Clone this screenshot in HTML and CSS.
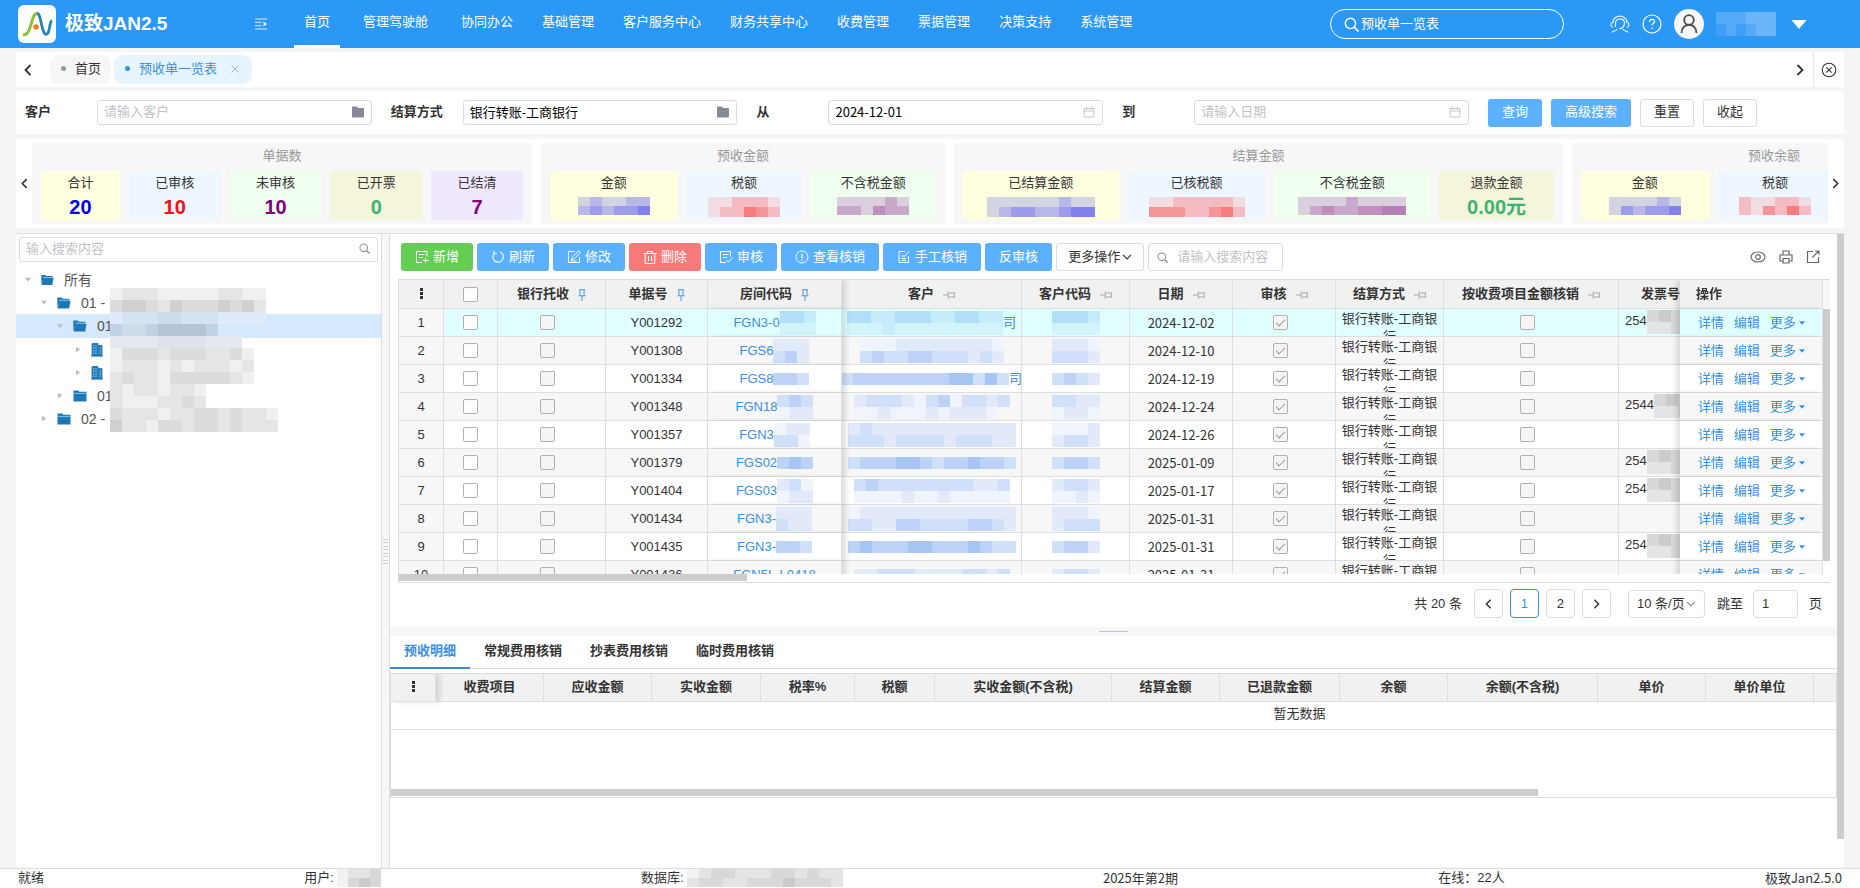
FILE: index.html
```html
<!DOCTYPE html>
<html lang="zh-CN">
<head>
  <meta charset="UTF-8">
  <meta name="viewport" content="width=device-width, initial-scale=1.0">
  <title>预收单一览表</title>
  <link rel="stylesheet" href="styles.css">
</head>
<body>
  <svg class="sprite" width="0" height="0" aria-hidden="true">
    <symbol id="i-left" viewBox="0 0 8 12"><path d="M6.5 1 1.5 6l5 5" fill="none" stroke="currentColor" stroke-width="1.8"/></symbol>
    <symbol id="i-right" viewBox="0 0 8 12"><path d="M1.5 1l5 5-5 5" fill="none" stroke="currentColor" stroke-width="1.8"/></symbol>
    <symbol id="i-down" viewBox="0 0 10 6"><path d="M1 .8l4 4 4-4" fill="none" stroke="currentColor" stroke-width="1.2"/></symbol>
    <symbol id="i-search" viewBox="0 0 14 14"><circle cx="6" cy="6" r="4.8" fill="none" stroke="currentColor" stroke-width="1.3"/><path d="M9.5 9.5l4 4" stroke="currentColor" stroke-width="1.6"/></symbol>
    <symbol id="i-folder" viewBox="0 0 14 12"><path d="M1 1.5q0-1 1-1h3.600l1.600 1.500H12q1 0 1 1v7.500q0 1-1 1H2q-1 0-1-1z" fill="currentColor"/></symbol>
    <symbol id="i-date" viewBox="0 0 12 12"><path d="M1 2.500h10v8.500H1zM1 5h10M3.500.5v3M8.500.5v3" fill="none" stroke="currentColor"/></symbol>
    <symbol id="i-pin" viewBox="0 0 8 12"><path d="M1 .7h6M2 1v5.500M6 1v5.500M.3 6.800h7.400M4 7v5" fill="none" stroke="currentColor"/></symbol>
    <symbol id="i-pin-off" viewBox="0 0 12 8"><path d="M0 4h5M5.200.3v7.400M5.500 2h5.500M5.500 6h5.500M11.300 1v6" fill="none" stroke="currentColor"/></symbol>
    <symbol id="i-tree-folder" viewBox="0 0 14 12"><path d="M.5 2V.5h4.800l1 1.200h7.200V4H.5z" fill="#1d78b8"/><path d="M.5 3.400h13" stroke="#8fc3e8"/><path d="M.5 4h13v7.500H.5z" fill="#1d78b8"/></symbol>
    <symbol id="i-tree-open" viewBox="0 0 14 12"><path d="M.3 11V.5h4.500l1 1.200h6.500V4H2.500z" fill="#1d78b8"/><path d="M2.200 3.800h11.300L12.200 11.500H.7z" fill="#1d78b8"/><path d="M2.300 3.300h10.500" stroke="#8fc3e8"/></symbol>
    <symbol id="i-building" viewBox="0 0 12 14"><path d="M1 .5h6V13H1zM7.500 2.500H11V13H7.500zM0 13h12" fill="#1d78b8" stroke="#1d78b8" stroke-width=".8"/><path d="M2.800 2v10M5 2v10M9.300 4.500v7.500" stroke="#9fcdec" stroke-width="1" stroke-dasharray="1.500 1"/></symbol>
    <symbol id="i-add" viewBox="0 0 14 14"><path d="M12 6.500V1.500H1.500v11H7M4 4.500h5.500M4 7.500h4M10.500 8v5M8 10.500h5.500" fill="none" stroke="currentColor"/></symbol>
    <symbol id="i-refresh" viewBox="0 0 14 14"><path d="M3.500 3.200A5.200 5.200 0 1 0 9 2.100M3 .8v3h3" fill="none" stroke="currentColor" stroke-width="1.100"/></symbol>
    <symbol id="i-edit" viewBox="0 0 14 14"><path d="M7.500 1.500h-6v11h11V7M4.500 9.800l.6-2.600L11.500.900l1.800 1.700-6.300 6.400z M3.500 11h6" fill="none" stroke="currentColor"/></symbol>
    <symbol id="i-trash" viewBox="0 0 14 14"><path d="M.5 3.500h13M4.500 3.500v-2h5v2M2.200 3.500v10h9.600v-10M5.500 6v5M8.500 6v5" fill="none" stroke="currentColor"/></symbol>
    <symbol id="i-audit" viewBox="0 0 14 14"><path d="M11.500 6.500v-5h-10v11H7M4 4.500h5.500M4 7.500h4M7.500 10l2 2.200 4-4.700" fill="none" stroke="currentColor"/></symbol>
    <symbol id="i-info" viewBox="0 0 14 14"><circle cx="7" cy="7" r="6" fill="none" stroke="currentColor"/><path d="M7 3.500v5M7 9.500v1.300" stroke="currentColor" stroke-width="1.200"/></symbol>
    <symbol id="i-note" viewBox="0 0 14 14"><path d="M8 1.500H2v11h9.500V6M4.500 6h3M4.500 8.500h4.500M4.500 10.500h4.500M7.500 6.500l4.500-5" fill="none" stroke="currentColor"/></symbol>
    <symbol id="i-eye" viewBox="0 0 16 14"><ellipse cx="8" cy="7" rx="7" ry="5" fill="none" stroke="currentColor" stroke-width="1.200"/><circle cx="8" cy="7" r="2.300" fill="none" stroke="currentColor" stroke-width="1.200"/></symbol>
    <symbol id="i-print" viewBox="0 0 14 14"><path d="M4 5V1h6v4M4 11H1V5h12v6h-3M4 8.500h6V13H4z" fill="none" stroke="currentColor" stroke-width="1.200"/></symbol>
    <symbol id="i-export" viewBox="0 0 14 14"><path d="M7 1.500H1.500v11h11V7M6.500 7.500l6-6.500M9 1h4v4" fill="none" stroke="currentColor" stroke-width="1.200"/></symbol>
    <symbol id="i-caret" viewBox="0 0 10 6"><path d="M0 0h10L5 6z" fill="currentColor"/></symbol>
  </svg>

  <header class="topbar">
    <svg class="logo" viewBox="0 0 38 38" role="img" aria-label="极致">
      <rect width="38" height="38" rx="6" fill="#fff"/>
      <path d="M5 29.500c5 1 6-4 8-10s2.500-11 6-11" fill="none" stroke="#8fc03a" stroke-width="3"/>
      <path d="M19 8.500c3 0 3.500 7 5 13s3 9 5 7.500c2-1 2.500-6 3-9 .5-2.500 1-4 2-4.500" fill="none" stroke="#2187b8" stroke-width="2.800"/>
      <circle cx="18" cy="22" r="2.800" fill="#f08020"/>
    </svg>
    <h1 class="brand">极致JAN2.5</h1>
    <button class="icon-btn collapse" aria-label="收起菜单">
      <svg width="12" height="12" viewBox="0 0 12 12"><path d="M0 1h12M0 4.300h6.500M0 7.700h6.500M0 11h12" stroke="#d5ebff"/><path d="M8.500 3.500v5L12 6z" fill="#fff"/></svg>
    </button>
    <nav class="menu">
      <a class="active" href="#">首页</a>
      <a href="#">管理驾驶舱</a>
      <a href="#">协同办公</a>
      <a href="#">基础管理</a>
      <a href="#">客户服务中心</a>
      <a href="#">财务共享中心</a>
      <a href="#">收费管理</a>
      <a href="#">票据管理</a>
      <a href="#">决策支持</a>
      <a href="#">系统管理</a>
    </nav>
    <div class="top-search">
      <svg width="15" height="15"><use href="#i-search"/></svg>
      <input type="text" value="预收单一览表" aria-label="搜索菜单">
    </div>
    <div class="user">
      <svg width="20" height="20" viewBox="0 0 20 20" fill="none" stroke="#e4f2ff" stroke-width="1.200"><path d="M3 13.500C-.5 12 1 8 3 8.500 3 0 16.500 0 17 8.500c2-.5 3 3.500 0 5M5.500 13V9c0-5.500 9-5.500 9 0 0 4-3 6-5.500 5.500M2 18.500c.5-2 5-1 5-3.500M18 18.500c-.5-2-5-1-5-3.500"/></svg>
      <svg width="20" height="20" viewBox="0 0 20 20" fill="none" stroke="#fff" stroke-width="1.200"><circle cx="10" cy="10" r="9"/><path d="M7.500 8c0-3.500 5-3.500 5-.5 0 2-2.500 2-2.500 4M10 13.500V15"/></svg>
      <svg width="30" height="30" viewBox="0 0 30 30"><circle cx="15" cy="15" r="15" fill="#f7f7f7"/><g fill="none" stroke="#4a4a4a" stroke-width="1.800"><circle cx="15" cy="11" r="4.800"/><path d="M7.500 24c0-11 15-11 15 0"/></g></svg>
      <span class="mosaic" data-kind="sky" data-c="bbbccc/ababcc" data-w="10" data-h="12"></span>
      <button class="icon-btn" aria-label="用户菜单"><svg width="16" height="9" viewBox="0 0 10 6"><path d="M0 0h10L5 6z" fill="#fff"/></svg></button>
    </div>
  </header>

  <main class="page">
    <div class="tabs-bar">
      <button class="icon-btn" aria-label="向左"><svg width="8" height="12"><use href="#i-left"/></svg></button>
      <div class="page-tabs">
        <a class="page-tab" href="#"><i class="dot"></i>首页</a>
        <a class="page-tab current" href="#"><i class="dot"></i>预收单一览表<svg class="close" width="8" height="8" viewBox="0 0 8 8"><path d="M.5.5l7 7M7.500.5l-7 7" stroke="#a9b4be"/></svg></a>
      </div>
      <button class="icon-btn" aria-label="向右"><svg width="8" height="12"><use href="#i-right"/></svg></button>
      <button class="icon-btn close-all" aria-label="关闭全部"><svg width="16" height="16" viewBox="0 0 16 16" fill="none" stroke="#333" stroke-width="1.100"><circle cx="8" cy="8" r="6.800"/><path d="M5.300 5.300l5.400 5.400M10.700 5.300l-5.400 5.400"/></svg></button>
    </div>

    <form class="filter">
      <div class="field">
        <label for="customer">客户</label>
        <div class="box"><input id="customer" type="text" placeholder="请输入客户"><svg class="folder" width="14" height="12"><use href="#i-folder"/></svg></div>
      </div>
      <div class="field">
        <label for="payway">结算方式</label>
        <div class="box"><input id="payway" type="text" value="银行转账-工商银行"><svg class="folder" width="14" height="12"><use href="#i-folder"/></svg></div>
      </div>
      <div class="field">
        <label for="from">从</label>
        <div class="box"><input id="from" class="noto" type="text" value="2024-12-01"><svg class="cal" width="12" height="12"><use href="#i-date"/></svg></div>
      </div>
      <div class="field">
        <label for="to">到</label>
        <div class="box"><input id="to" type="text" placeholder="请输入日期"><svg class="cal" width="12" height="12"><use href="#i-date"/></svg></div>
      </div>
      <div class="filter-btns">
        <button type="button" class="btn blue">查询</button>
        <button type="button" class="btn blue">高级搜索</button>
        <button type="button" class="btn">重置</button>
        <button type="button" class="btn">收起</button>
      </div>
    </form>

    <section class="stats">
      <button class="icon-btn" aria-label="上一组"><svg width="7" height="11"><use href="#i-left"/></svg></button>
      <div class="stats-track">
        <div class="group g-count">
          <h2>单据数</h2>
          <div class="cells">
            <div class="stat yellow"><span>合计</span><b>20</b></div>
            <div class="stat azure"><span>已审核</span><b>10</b></div>
            <div class="stat mint"><span>未审核</span><b>10</b></div>
            <div class="stat beige"><span>已开票</span><b>0</b></div>
            <div class="stat lilac"><span>已结清</span><b>7</b></div>
          </div>
        </div>
        <div class="group g-pre">
          <h2>预收金额</h2>
          <div class="cells">
            <div class="stat yellow"><span>金额</span><b><i class="mosaic" data-kind="violet" data-c="abaabb/bcbccd" data-h="9"></i></b></div>
            <div class="stat azure"><span>税额</span><b><i class="mosaic" data-kind="red" data-c="aabbba/abbdcb" data-h="10"></i></b></div>
            <div class="stat mint"><span>不含税金额</span><b><i class="mosaic" data-kind="plum" data-c="aaaaba/bbacbb" data-h="9"></i></b></div>
          </div>
        </div>
        <div class="group g-settle">
          <h2>结算金额</h2>
          <div class="cells">
            <div class="stat yellow"><span>已结算金额</span><b><i class="mosaic" data-kind="violet" data-c="aaaaaabaa/abccbbcdd" data-h="10"></i></b></div>
            <div class="stat azure"><span>已核税额</span><b><i class="mosaic" data-kind="red" data-c="aabbbbba/cccbbcdb" data-h="10"></i></b></div>
            <div class="stat mint"><span>不含税金额</span><b><i class="mosaic" data-kind="plum" data-c="aaaabaaaa/abcbbccdd" data-h="9"></i></b></div>
            <div class="stat beige"><span>退款金额</span><b>0.00元</b></div>
          </div>
        </div>
        <div class="group g-pre">
          <h2>预收余额</h2>
          <div class="cells">
            <div class="stat yellow"><span>金额</span><b><i class="mosaic" data-kind="violet" data-c="aaaaba/acbccd" data-h="9"></i></b></div>
            <div class="stat azure"><span>税额</span><b><i class="mosaic" data-kind="red" data-c="baabba/bacbdb" data-h="9"></i></b></div>
            <div class="stat mint"></div>
          </div>
        </div>
      </div>
      <button class="icon-btn" aria-label="下一组"><svg width="7" height="11"><use href="#i-right"/></svg></button>
    </section>

    <div class="work">
      <aside class="side">
        <div class="box side-search"><input type="text" placeholder="输入搜索内容" aria-label="搜索房产"><svg class="cal glass" width="11" height="11"><use href="#i-search"/></svg></div>
        <ul class="tree">
          <li class="l1"><i class="arrow open"></i><svg width="13" height="12"><use href="#i-tree-open"/></svg>所有</li>
          <li class="l2"><i class="arrow open"></i><svg width="14" height="12"><use href="#i-tree-open"/></svg>01 -</li>
          <li class="l3 selected"><i class="arrow open"></i><svg width="14" height="12"><use href="#i-tree-open"/></svg>01</li>
          <li class="l4"><i class="arrow"></i><svg width="12" height="14"><use href="#i-building"/></svg></li>
          <li class="l4"><i class="arrow"></i><svg width="12" height="14"><use href="#i-building"/></svg></li>
          <li class="l3"><i class="arrow"></i><svg width="14" height="12"><use href="#i-tree-folder"/></svg>01</li>
          <li class="l2"><i class="arrow"></i><svg width="14" height="12"><use href="#i-tree-folder"/></svg>02 -</li>
          <li class="veil mosaic" data-kind="tree" data-c="abbbaaaaabbaa./cddcbdcccdcdb./qpppoopppqqqq./roorssssr...../mmmmnnnnmmm.../acccbcccbbca../abbbababbbab../bcbbacccccba../babbabba....../baaabbcb....../cbbbabbccbcbba/dbbaccbccbcbbb"></li>
        </ul>
      </aside>
      <div class="gutter"><i></i><i></i><i></i><i></i></div>

      <section class="content">
        <div class="toolbar">
          <button class="btn green"><svg width="14" height="14"><use href="#i-add"/></svg>新增</button>
          <button class="btn blue"><svg width="14" height="14"><use href="#i-refresh"/></svg>刷新</button>
          <button class="btn blue"><svg width="14" height="14"><use href="#i-edit"/></svg>修改</button>
          <button class="btn red"><svg width="14" height="14"><use href="#i-trash"/></svg>删除</button>
          <button class="btn blue"><svg width="14" height="14"><use href="#i-audit"/></svg>审核</button>
          <button class="btn blue"><svg width="14" height="14"><use href="#i-info"/></svg>查看核销</button>
          <button class="btn blue"><svg width="14" height="14"><use href="#i-note"/></svg>手工核销</button>
          <button class="btn blue">反审核</button>
          <button class="btn more">更多操作<svg width="10" height="6"><use href="#i-down"/></svg></button>
          <div class="tool-search"><svg width="11" height="11"><use href="#i-search"/></svg><input type="text" placeholder="请输入搜索内容" aria-label="搜索单据"></div>
          <div class="tool-icons">
            <button class="icon-btn" aria-label="显示列"><svg width="16" height="14"><use href="#i-eye"/></svg></button>
            <button class="icon-btn" aria-label="打印"><svg width="14" height="14"><use href="#i-print"/></svg></button>
            <button class="icon-btn" aria-label="导出"><svg width="14" height="14"><use href="#i-export"/></svg></button>
          </div>
        </div>

        <div class="grid-wrap">
          <div class="grid-scroll">
            <table class="grid">
              <colgroup>
                <col class="c45"><col class="c54"><col class="c108"><col class="c102"><col class="c134"><col><col class="c108"><col class="c103"><col class="c103"><col class="c108"><col class="c175"><col class="c120"><col class="c143">
              </colgroup>
              <thead>
                <tr>
                  <th><i class="dots"></i></th>
                  <th><input type="checkbox" aria-label="全选"></th>
                  <th>银行托收<svg class="pin on" width="8" height="12"><use href="#i-pin"/></svg></th>
                  <th>单据号<svg class="pin on" width="8" height="12"><use href="#i-pin"/></svg></th>
                  <th class="edge">房间代码<svg class="pin on" width="8" height="12"><use href="#i-pin"/></svg></th>
                  <th>客户<svg class="pin" width="12" height="8"><use href="#i-pin-off"/></svg></th>
                  <th>客户代码<svg class="pin" width="12" height="8"><use href="#i-pin-off"/></svg></th>
                  <th>日期<svg class="pin" width="12" height="8"><use href="#i-pin-off"/></svg></th>
                  <th>审核<svg class="pin" width="12" height="8"><use href="#i-pin-off"/></svg></th>
                  <th>结算方式<svg class="pin" width="12" height="8"><use href="#i-pin-off"/></svg></th>
                  <th>按收费项目金额核销<svg class="pin" width="12" height="8"><use href="#i-pin-off"/></svg></th>
                  <th class="invoice">发票号<svg class="pin" width="12" height="8"><use href="#i-pin-off"/></svg></th>
                  <th class="act">操作</th>
                </tr>
              </thead>
              <tbody id="rows"></tbody>
            </table>
          </div>
          <div class="vbar"><i></i></div>
          <div class="hbar"><i></i></div>
        </div>

        <div class="pager">
          <span class="total">共 20 条</span>
          <button class="pg" aria-label="上一页"><svg width="7" height="10"><use href="#i-left"/></svg></button>
          <button class="pg current">1</button>
          <button class="pg">2</button>
          <button class="pg" aria-label="下一页"><svg width="7" height="10"><use href="#i-right"/></svg></button>
          <div class="size"><select aria-label="每页条数"><option>10 条/页</option></select><svg width="10" height="6"><use href="#i-down"/></svg></div>
          <label for="jump">跳至</label>
          <input id="jump" type="text" value="1">
          <span class="unit">页</span>
        </div>

        <div class="splitter"><i></i></div>

        <div class="sub-tabs">
          <button class="current">预收明细</button>
          <button>常规费用核销</button>
          <button>抄表费用核销</button>
          <button>临时费用核销</button>
        </div>

        <div class="detail">
          <table>
            <colgroup>
              <col class="c45"><col class="c108"><col class="c108"><col class="c109"><col class="c94"><col class="c80"><col class="c177"><col class="c108"><col class="c120"><col class="c108"><col class="c150"><col class="c108"><col class="c108"><col class="c108"><col class="c287">
            </colgroup>
            <thead>
              <tr><th class="edge"><i class="dots"></i></th><th>收费项目</th><th>应收金额</th><th>实收金额</th><th>税率%</th><th>税额</th><th>实收金额(不含税)</th><th>结算金额</th><th>已退款金额</th><th>余额</th><th>余额(不含税)</th><th>单价</th><th>单价单位</th><th></th><th></th></tr>
            </thead>
            <tbody>
              <tr><td colspan="15">暂无数据</td></tr>
            </tbody>
          </table>
          <div class="hbar wide"><i></i></div>
        </div>
      </section>
      <div class="page-bar"><i></i></div>
    </div>
  </main>

  <footer class="status">
    <span>就绪</span>
    <span>用户:<i class="mosaic" data-kind="grey" data-c="abbc/acdc" data-w="11" data-h="9"></i></span>
    <span>数据库:<i class="mosaic" data-kind="grey" data-c="abccbbbccbcbb/bccbbcccdcccb" data-h="9"></i></span>
    <span class="noto">2025年第2期</span>
    <span>在线：22人</span>
    <span class="noto">极致Jan2.5.0</span>
  </footer>
  <script src="script.js"></script>
</body>
</html>
```

FILE: styles.css
```css
* { box-sizing: border-box; }
body {
  margin: 0;
  height: 100vh;
  display: flex;
  flex-direction: column;
  background: #f5f5f5;
  color: #333;
  font: 13px/18px "Liberation Sans", "Noto Sans CJK SC", sans-serif;
  overflow: hidden;
}
a { color: inherit; text-decoration: none; }
input, button, select { font: inherit; color: inherit; margin: 0; }
input { min-width: 0; }
i { font-style: normal; }
svg { flex: none; display: block; }
.sprite { position: absolute; }
.noto { font-family: "Noto Sans CJK SC", sans-serif; }
.mosaic { display: inline-block; vertical-align: middle; }
.icon-btn {
  display: flex;
  align-items: center;
  justify-content: center;
  padding: 0;
  border: 0;
  background: none;
  flex: none;
}
::placeholder { color: #bfc3c9; opacity: 1; }

/* top bar */
.topbar {
  flex: none;
  height: 48px;
  display: flex;
  align-items: center;
  padding: 0 53px 0 18px;
  background: #2c98f5;
  color: #fff;
}
.logo { width: 38px; height: 38px; }
.brand { width: 190px; margin: 0 0 0 9px; font-size: 19px; line-height: 24px; }
.collapse { width: 12px; }
.menu { display: flex; gap: 9px; margin-left: 27px; }
.menu a { height: 48px; padding: 0 10px; line-height: 44px; white-space: nowrap; }
.menu a:nth-child(-n+2) { margin-right: 4px; }
.menu a.active { border-bottom: 3px solid #fff; }
.top-search {
  width: 234px;
  height: 30px;
  margin-left: auto;
  padding: 0 13px;
  display: flex;
  align-items: center;
  gap: 2px;
  border: 1px solid #fff;
  border-radius: 15px;
}
.top-search input { flex: 1; padding: 0; border: 0; background: none; outline: 0; }
.user { display: flex; align-items: center; gap: 12px; margin-left: 46px; }
.user .icon-btn { margin-left: 3px; }

/* page */
.page { flex: 1; min-height: 0; display: flex; flex-direction: column; padding: 4px 16px 0; }
.tabs-bar { flex: none; height: 35px; display: flex; align-items: center; padding-left: 8px; background: #fff; }
.page-tabs { flex: 1; display: flex; gap: 3px; padding-left: 18px; }
.page-tab { height: 29px; display: flex; align-items: center; padding: 0 10px 2px 11px; border-radius: 9px; background: #f7f7f7; }
.page-tab.current { background: #e6f4ff; color: #3a8fe0; padding-right: 13px; }
.dot { width: 5px; height: 5px; margin-right: 9px; border-radius: 50%; background: #999; }
.current .dot { background: #3a8fe0; }
.page-tab .close { margin-left: 14px; }
.close-all { width: 31px; height: 35px; margin-left: 9px; border-left: 1px solid #e8e8e8; }

.filter { flex: none; height: 43px; margin-top: 4px; display: flex; align-items: center; padding: 0 87px 0 9px; background: #fff; }
.field { flex: 1; display: flex; align-items: center; padding-right: 19px; }
.field label { width: 72px; padding-bottom: 2px; flex: none; font-weight: bold; }
.box { position: relative; flex: 1; height: 25px; }
.box input { width: 100%; height: 100%; padding: 0 28px 2px 6px; border: 1px solid #dcdcdc; border-radius: 3px; background: #fff; color: #000; outline: 0; }
.box svg { position: absolute; right: 7px; top: 6px; color: #858a99; }
.box .cal { right: 8px; color: #c0c4cc; }
.box .glass { color: #858a99; }
.filter-btns { display: flex; gap: 9px; }
.btn {
  height: 28px;
  padding: 0 13px 1px;
  display: flex;
  align-items: center;
  justify-content: center;
  gap: 4px;
  border: 1px solid #dcdcdc;
  border-radius: 3px;
  background: #fff;
  white-space: nowrap;
}
.btn.blue, .btn.green, .btn.red { color: #fff; border: 0; padding: 0 14px 1px; }
.btn.blue { background: #5bb1ff; }
.btn.green { background: #64ce54; }
.btn.red { background: #f97978; }

/* statistics */
.stats { flex: none; margin-top: 5px; padding: 4px 5px; display: flex; align-items: center; background: #fff; }
.stats .icon-btn { width: 7px; }
.stats-track { flex: 1; min-width: 0; margin: 0 4px; display: flex; gap: 9px; overflow: hidden; }
.group { flex: none; height: 81px; padding: 4px 9px; background: #f7f7f7; }
.g-count { width: 500px; }
.g-pre { width: 404px; }
.g-settle { width: 609px; }
.group h2 { margin: 0; font-size: 13px; line-height: 18px; font-weight: normal; color: #999; text-align: center; }
.cells { display: flex; gap: 9px; margin-top: 6px; }
.stat { flex: 1 1 92px; height: 49px; text-align: center; color: #333; }
.g-count .yellow { flex-basis: 79px; }
.g-pre .yellow { flex-basis: 128px; }
.g-pre .azure { flex-basis: 115px; }
.g-pre .mint { flex-basis: 126px; }
.g-settle .stat { flex-basis: 156px; }
.g-settle .azure { flex-basis: 138px; }
.g-settle .beige { flex-basis: 115px; }
.stat span, .stat b { display: block; height: 24px; line-height: 24px; }
.stat b { font-size: 20px; }
.stat .mosaic { display: flex; justify-content: center; padding-top: 2px; }
.yellow { background: #ffffe0; }
.yellow b { color: #0000e0; }
.azure { background: #eef7ff; }
.azure b { color: #f01010; }
.mint { background: #f0fff0; }
.mint b, .lilac b { color: #800080; }
.beige { background: #f5f5dc; }
.beige b { color: #3cb371; }
.lilac { background: #f0e8ff; }

/* work area */
.work { flex: 1; min-height: 0; margin-top: 5px; display: flex; border-top: 1px solid #dcdcdc; background: #fff; }
.side { width: 366px; flex: none; padding: 3px 3px 0; border-right: 1px solid #dcdcdc; }
.side-search input { color: #333; }
.tree { position: relative; list-style: none; margin: 6px -3px 0; padding: 0; }
.tree li:not(.veil) { height: 23px; display: flex; align-items: center; gap: 10px; color: #555; font-size: 14px; }
.tree .l1 { padding-left: 9px; }
.tree .l2 { padding-left: 25px; }
.tree .l3 { padding-left: 41px; }
.tree .l4 { padding-left: 59px; }
.tree li.selected:not(.veil) { height: 24px; background: #d6e8fb; }
.arrow { width: 6px; height: 6px; flex: none; background: #b8bcc4; clip-path: polygon(20% 0, 85% 50%, 20% 100%); }
.arrow.open { clip-path: polygon(0 20%, 100% 20%, 50% 85%); }
.veil { position: absolute; left: 94px; top: 20px; }
.gutter {
  width: 8px;
  flex: none;
  display: flex;
  flex-direction: column;
  align-items: center;
  justify-content: center;
  gap: 3px;
  background: #f7f7f7;
  border-right: 1px solid #dcdcdc;
}
.gutter i { width: 5px; height: 4px; border: 1px solid #ccc; border-width: 1px 0; }
.content { flex: 1; min-width: 0; }
.page-bar { width: 7px; flex: none; background: #fff; }
.page-bar i { display: block; height: 605px; background: #ccc; }

.toolbar { display: flex; align-items: center; gap: 4px; padding: 9px 17px 0 11px; }
.toolbar .btn.more { padding: 0 11px 1px; gap: 2px; }
.tool-search { width: 135px; height: 28px; display: flex; align-items: center; gap: 9px; padding: 0 8px; border: 1px solid #dcdcdc; border-radius: 3px; color: #858a99; }
.tool-search input { flex: 1; padding: 0; border: 0; outline: 0; }
.tool-icons { display: flex; gap: 13px; margin-left: auto; color: #666; }

/* main grid */
.grid-wrap { margin: 8px 7px 0 8px; display: grid; grid-template-columns: 1fr 7px; border: 1px solid #dcdcdc; border-right: 0; }
.grid-scroll { height: 294px; overflow: hidden; }
table { border-collapse: separate; border-spacing: 0; table-layout: fixed; }
.grid { width: 100%; min-width: 1483px; }
th, td { padding: 0; text-align: center; border-right: 1px solid #dcdfe2; border-bottom: 1px solid #dcdfe2; white-space: nowrap; }
th { height: 29px; background: #f1f1f1; }
.grid td { height: 28px; background: #fff; }
.grid tr:nth-child(even) td, .grid td:first-child { background: #f7f7f7; }
.grid tbody tr:first-child td:not(:first-child) { background: #e0ffff; }
.cell { height: 27px; display: flex; align-items: center; justify-content: center; overflow: hidden; }
.cell.flag { padding-right: 8px; }
.cell.wrap { display: block; padding: 1px 4px 0; white-space: normal; }
.grid .edge, .detail .edge { position: relative; z-index: 1; box-shadow: 4px 0 5px rgba(0, 0, 0, .12); }
.grid .act { position: sticky; right: 0; z-index: 2; box-shadow: -4px 0 5px rgba(0, 0, 0, .12); }
th.act { padding-left: 16px; text-align: left; }
td.act .cell { justify-content: flex-start; padding-left: 18px; gap: 10px; }
.act a { display: flex; align-items: center; gap: 3px; }
.grid a { color: #3a8fe0; }
.pin { display: inline-block; vertical-align: -1px; margin-left: 9px; color: #aaa; }
.pin.on { vertical-align: -3px; color: #4a9ad4; }
.invoice { text-align: left; padding-left: 22px; }
td.invoice { padding-left: 2px; }
.cell b { font-weight: normal; }
.dots { display: inline-block; width: 3px; height: 11px; vertical-align: -1px; background: linear-gradient(#333 3px, transparent 3px, transparent 4px, #333 4px, #333 7px, transparent 7px, transparent 8px, #333 8px); }
input[type="checkbox"] { appearance: none; width: 15px; height: 15px; display: inline-flex; align-items: center; justify-content: center; vertical-align: middle; border: 1px solid #b0b0b0; border-radius: 2px; background: #fff; }
input[type="checkbox"]:disabled { background: #f5f5f5; }
input[type="checkbox"]:checked::after { content: ""; width: 4px; height: 8px; margin-bottom: 2px; border: solid #999; border-width: 0 1px 1px 0; transform: rotate(45deg); }
.c45 { width: 45px; }
.c54 { width: 54px; }
.c80 { width: 80px; }
.c94 { width: 94px; }
.c102 { width: 102px; }
.c103 { width: 103px; }
.c108 { width: 108px; }
.c109 { width: 109px; }
.c120 { width: 120px; }
.c134 { width: 134px; }
.c143 { width: 143px; }
.c150 { width: 150px; }
.c175 { width: 175px; }
.c177 { width: 177px; }
.c287 { width: 287px; }
.vbar { padding-top: 29px; background: linear-gradient(#f7f7f7 28px, #fff 28px); }
.vbar i { display: block; height: 252px; background: #ccc; }
.hbar { grid-column: 1 / 3; height: 8px; }
.hbar i { display: block; width: 24.3%; height: 7px; background: #ccc; }

/* paging */
.pager { display: flex; align-items: center; gap: 7px; padding: 6px 15px 9px; justify-content: flex-end; }
.total { margin-right: 5px; }
.pg { width: 29px; height: 29px; padding: 0; display: flex; align-items: center; justify-content: center; border: 1px solid #dcdcdc; border-radius: 4px; background: #fff; }
.pg.current { border-color: #3a8fe0; color: #3a8fe0; }
.size { position: relative; margin: 0 5px 0 10px; }
.size select { appearance: none; width: 77px; height: 28px; padding: 0 8px; border: 1px solid #dcdcdc; border-radius: 4px; background: #fff; }
.size svg { position: absolute; right: 9px; top: 11px; color: #858a99; }
#jump { width: 45px; height: 28px; margin: 0 4px 0 3px; padding: 0 8px; border: 1px solid #dcdcdc; border-radius: 4px; }

/* details */
.splitter { height: 9px; display: flex; align-items: center; justify-content: center; background: #f7f7f7; }
.splitter i { width: 29px; height: 1px; background: #c0c4cc; }
.sub-tabs { display: flex; border-bottom: 1px solid #dcdcdc; }
.sub-tabs button { height: 33px; padding: 0 14px 1px; margin-bottom: -1px; border: 0; border-bottom: 2px solid transparent; background: none; font-weight: bold; }
.sub-tabs .current { border-color: #3e8ad0; color: #3a8fe0; }
.detail { margin-top: 4px; border: 1px solid #dcdcdc; overflow: hidden; }
.detail table { width: 1818px; }
.detail th { height: 28px; padding-bottom: 1px; }
.detail td { height: 28px; padding-bottom: 3px; }
.detail .hbar { height: 8px; margin-top: 59px; }
.detail .hbar i { width: 79.4%; }

/* status line */
.status { flex: none; height: 20px; display: flex; justify-content: space-between; padding: 0 18px; border-top: 1px solid #dcdcdc; background: #fff; line-height: 18px; white-space: nowrap; }
.status span { display: flex; gap: 3px; }
```

FILE: script.js
```js
const palettes = {
  sky: { a: '#3f9ff6', b: '#55aaf8', c: '#6cb4f9' },
  violet: { a: '#d3d4e2', b: '#b8b8e8', c: '#9c9cec', d: '#8080ee' },
  red: { a: '#f2dde2', b: '#f4bcc2', c: '#f59598', d: '#f87b7d' },
  plum: { a: '#dccfdd', b: '#c9a8cb', c: '#c08fc0', d: '#b67db6' },
  grey: { a: '#f2f2f3', b: '#e3e4e5', c: '#d8d8d9', d: '#cbcbcb' },
  blue: { a: '#f0f4fc', b: '#e2eafa', c: '#d0e0f8', d: '#bcd2f6', e: '#a6c6f4' },
  cyan: { a: '#d2f3fb', b: '#c4ecfa', c: '#b2dff8', d: '#b2dff8', e: '#a6d8f6' },
  tree: {
    a: '#f0f0f0', b: '#e5e5e6', c: '#dbdcdc', d: '#cfd0d2',
    m: '#e4e9f1', n: '#dde2ec', o: '#cddbea', p: '#d4e2f2', q: '#dfebfb', r: '#c0d2e6', s: '#b3c4d7'
  }
};

function mosaic(kind, code, w = 12, h = 12) {
  const lines = code.split('/');
  let out = '';
  lines.forEach((line, y) => {
    [...line].forEach((c, x) => {
      if (palettes[kind][c]) {
        out += `<rect x="${x * w}" y="${y * h}" width="${w}" height="${h}" fill="${palettes[kind][c]}"/>`;
      }
    });
  });
  return `<svg width="${lines[0].length * w}" height="${lines.length * h}" shape-rendering="crispEdges">${out}</svg>`;
}

document.querySelectorAll('.mosaic').forEach(el => {
  el.innerHTML = mosaic(el.dataset.kind, el.dataset.c, +el.dataset.w || 12, +el.dataset.h || 12);
});

// number, room, room mask, customer mask, customer tail, code mask, date, invoice
const rows = [
  ['Y001292', 'FGN3-0', 'ccb/aaa', 'ccbbcccbbccbb/aaabaaaaaaaaa', '司', 'cccb/aaaa', '2024-12-02', '254'],
  ['Y001308', 'FGS6', 'bbb/cdb', 'aaabbbbbbbba/cdccddcccbcb', '', 'bbba/cccb', '2024-12-10', ''],
  ['Y001334', 'FGS8', 'ddc', 'cddddddddeecec', '司', 'cdcb', '2024-12-19', ''],
  ['Y001348', 'FGN18', 'cdc/abb', 'bcccbacdaccbc/aabaaababbba', '', 'ccbb/abba', '2024-12-24', '2544'],
  ['Y001357', 'FGN3', 'abb/cca', 'bcbbbbbbbbbbbb/cccbccccbcccbb', '', 'aaab/bccb', '2024-12-26', ''],
  ['Y001379', 'FGS02', 'ded', 'cdddeedcddeddc', '', 'cddc', '2025-01-09', '254'],
  ['Y001404', 'FGS03', 'bca/abb', 'cdccccccccbbc/aaaabaabaaaaa', '', 'bccb/aaba', '2025-01-17', '254'],
  ['Y001434', 'FGN3-', 'bbb/cbb', 'abbbbbbbbbbbbb/ccbbddccccddcb', '', 'bbba/bccc', '2025-01-31', ''],
  ['Y001435', 'FGN3-', 'ddc', 'dedddeedddedcc', '', 'cddb', '2025-01-31', '254'],
  ['Y001436', 'FGN5L-L0418', '', 'bbcccbbbbccbc', '', 'bccb', '2025-01-31', '']
];

document.getElementById('rows').innerHTML = rows.map((r, i) => {
  const kind = i === 0 ? 'cyan' : 'blue';
  return `<tr>
    <td><div class="cell">${i + 1}</div></td>
    <td><div class="cell"><input type="checkbox" aria-label="选择 ${r[0]}"></div></td>
    <td><div class="cell flag"><input type="checkbox" disabled aria-label="银行托收"></div></td>
    <td><div class="cell">${r[0]}</div></td>
    <td class="edge"><div class="cell"><a href="#">${r[1]}</a>${r[2] ? mosaic(kind, r[2]) : ''}</div></td>
    <td><div class="cell">${mosaic(kind, r[3])}<a href="#">${r[4]}</a></div></td>
    <td><div class="cell">${mosaic(kind, r[5])}</div></td>
    <td><div class="cell noto">${r[6]}</div></td>
    <td><div class="cell flag"><input type="checkbox" checked disabled aria-label="审核"></div></td>
    <td><div class="cell wrap">银行转账-工商银行</div></td>
    <td><div class="cell flag"><input type="checkbox" disabled aria-label="按收费项目金额核销"></div></td>
    <td class="invoice"><div class="cell wrap"><b>${r[7]}</b>${r[7] ? '<span class="mosaic">' + mosaic('grey', 'cdcc/bbcc') + '</span>' : ''}</div></td>
    <td class="act"><div class="cell"><a href="#">详情</a><a href="#">编辑</a><a href="#">更多<svg width="6" height="4"><use href="#i-caret"/></svg></a></div></td>
  </tr>`;
}).join('');
```
